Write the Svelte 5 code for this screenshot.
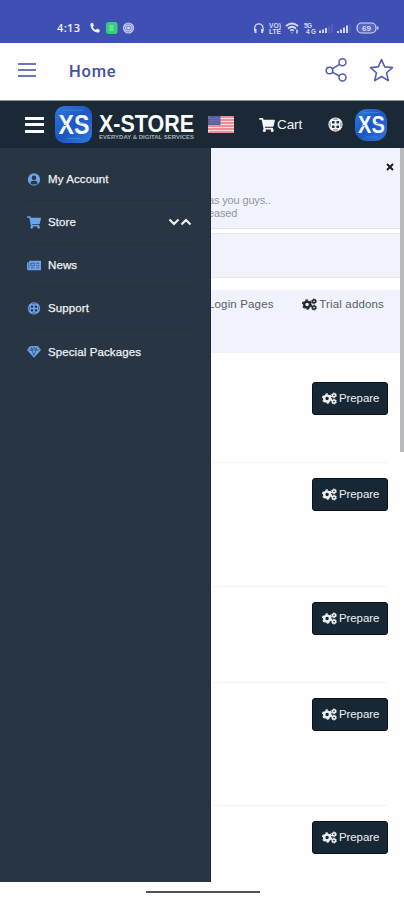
<script>
    const menu = [
        { label: 'My Account', icon: 'user' },
        { label: 'Store', icon: 'cart', expandable: true },
        { label: 'News', icon: 'news' },
        { label: 'Support', icon: 'support' },
        { label: 'Special Packages', icon: 'gem' }
    ];

    // row heights follow the hidden description text
    const rows = [96, 124, 96, 123, 76];
</script>

{#snippet icon(name)}
    {#if name === 'cart'}
        <svg class="icon" viewBox="0 0 576 512" fill="currentColor">
            <path d="M528.12 301.319l47.273-208C578.806 78.301 567.391 64 551.99 64H159.208l-9.166-44.81C147.758 8.021 137.93 0 126.529 0H24C10.745 0 0 10.745 0 24v16c0 13.255 10.745 24 24 24h69.883l70.248 343.435C147.325 417.1 136 435.222 136 456c0 30.928 25.072 56 56 56s56-25.072 56-56c0-15.674-6.447-29.835-16.824-40h209.647C430.447 426.165 424 440.326 424 456c0 30.928 25.072 56 56 56s56-25.072 56-56c0-22.172-12.888-41.332-31.579-50.405l5.517-24.276c3.413-15.018-8.002-29.319-23.403-29.319H218.117l-6.545-32h293.145c11.206 0 20.92-7.754 23.403-18.681z" />
        </svg>
    {:else if name === 'user'}
        <svg class="icon" viewBox="0 0 16 16">
            <circle cx="8" cy="8" r="7.6" fill="currentColor" />
            <circle cx="8" cy="5.9" r="2.7" fill="#283643" />
            <path d="M3.4 12.2c.7-2 2-2.7 4.6-2.7s3.9.7 4.6 2.7c-2.3 2.5-6.9 2.5-9.2 0z" fill="#283643" />
        </svg>
    {:else if name === 'news'}
        <svg class="icon" viewBox="0 0 18 14">
            <path d="M3 1h15v12H2a2 2 0 0 1-2-2V3h2" fill="currentColor" />
            <path d="M2.3 3v8M5 4h4.5v3.500H5zM11.500 4.300h4.500M11.500 7h4.500M5 10h4.500M11.500 10h4.500" fill="none" stroke="#283643" stroke-width=".7" />
        </svg>
    {:else if name === 'support'}
        <svg class="icon" viewBox="0 0 16 16">
            <circle cx="8" cy="8" r="7.6" fill="currentColor" />
            <g fill="#23313e">
                <rect x="4.200" y="4.200" width="2.800" height="2.800" rx=".6" />
                <rect x="9" y="4.200" width="2.800" height="2.800" rx=".6" />
                <rect x="4.200" y="9" width="2.800" height="2.800" rx=".6" />
                <rect x="9" y="9" width="2.800" height="2.800" rx=".6" />
            </g>
            <path d="M5.600 2.200h4.800M5.600 13.800h4.800M2.200 5.600v4.800M13.800 5.600v4.800" stroke="#23313e" stroke-width=".7" />
        </svg>
    {:else if name === 'gem'}
        <svg class="icon" viewBox="0 0 18 16">
            <path d="M4 1h10l4 5-9 10L0 6z" fill="currentColor" />
            <path d="M2 6h14M6 6l3 7 3-7M5 2l1.500 4L9 2l2.500 4L13 2" fill="none" stroke="#283643" stroke-width=".8" />
        </svg>
    {:else if name === 'cogs'}
        <svg class="icon" viewBox="0 0 20 16" fill="none" stroke="currentColor">
            <circle cx="6.800" cy="8" r="3.900" stroke-width="3.200" />
            <circle cx="6.800" cy="8" r="5.900" stroke-width="2" stroke-dasharray="3.400 2.780" />
            <circle cx="16" cy="3.800" r="2.100" stroke-width="2.100" />
            <circle cx="16" cy="3.800" r="3.300" stroke-width="1" stroke-dasharray="2 1.450" />
            <circle cx="16" cy="12.200" r="2.100" stroke-width="2.100" />
            <circle cx="16" cy="12.200" r="3.300" stroke-width="1" stroke-dasharray="2 1.450" />
        </svg>
    {/if}
{/snippet}

{#snippet badge()}
    <svg class="badge" viewBox="0 0 36 36">
        <defs>
            <linearGradient id="blue" x1="0" y1="0" x2="1" y2="1">
                <stop offset="0" stop-color="#2f7bdf" />
                <stop offset=".5" stop-color="#1c56c4" />
                <stop offset="1" stop-color="#2c79dc" />
            </linearGradient>
        </defs>
        <rect width="36" height="36" rx="9" fill="url(#blue)" />
        <path d="M8 4h20M12 31.500h13" stroke="#3f86e2" stroke-width=".8" />
        <text x="3.500" y="27" textLength="30" lengthAdjust="spacingAndGlyphs" class="badge-text">XS</text>
        <path d="M4 20.500l7-2M24 16.500h8" stroke="#2462cb" stroke-width=".9" />
    </svg>
{/snippet}

<div class="phone">
    <div class="status">
        <span class="clock">4:13</span>
        <svg class="left-icons" viewBox="0 0 46 14">
            <path d="M1.500 2.500l2.200-.7 1.300 3-1.300 1.100q1 2 3.100 3.100l1.200-1.400 3 1.400-.8 2.300C5.500 12.500.8 7.500 1.500 2.500z" fill="#eef0fc" />
            <rect x="17" y="1" width="11.500" height="12" rx="2.500" fill="#35cf79" />
            <path d="M20.500 5h4M20.500 7h3.500M20.500 9h4" stroke="#9cf0bd" stroke-width="1" />
            <circle cx="39.500" cy="7" r="5" fill="#7885ce" stroke="#c6ccf0" stroke-width="1.200" />
            <rect x="36.700" y="4.200" width="5.600" height="5.600" rx="1.500" fill="none" stroke="#d7dbf6" />
            <circle cx="39.500" cy="7" r="1.300" fill="#d7dbf6" />
        </svg>
        <svg class="right-icons" viewBox="0 0 126 14" fill="none" stroke="#d6daf5">
            <path d="M1.700 10V7a4 4 0 0 1 8.300 0v3" stroke-width="1.300" />
            <path d="M2.500 8v4M9.200 8v4" stroke-width="2" />
            <g class="tiny">
                <text x="16" y="6.500" textLength="12" lengthAdjust="spacingAndGlyphs">VO)</text>
                <text x="16" y="12.500" textLength="12" lengthAdjust="spacingAndGlyphs">LTE</text>
                <text x="51" y="6.500" textLength="8">5G</text>
                <text x="53" y="12.500" textLength="10">4G</text>
            </g>
            <path d="M33 5q6-5 12 0M35 7.500q4-3.500 8 0M37.200 9.700q1.800-1.500 3.600 0" stroke-width="1.700" />
            <path d="M39 11.500v.8M44 8.500v4" stroke-width="1.500" />
            <path d="M67 12v-2.500M70 12V8.500M73 12V7" stroke-width="1.900" />
            <path d="M76 12V5M79 12V3" stroke="#5566c0" stroke-width="1.500" />
            <path d="M85 12v-2M88 12V8.500M91 12V6.500M94 12V4.500" stroke-width="1.900" />
            <path d="M97 12V3" stroke="#5566c0" stroke-width="1.500" />
            <rect x="104" y="2" width="19" height="10" rx="4.500" fill="#5767c1" stroke-width="1.200" />
            <path d="M124.800 5.500v3" stroke-width="1.300" />
            <text class="battery" x="109" y="10">69</text>
        </svg>
    </div>

    <div class="appbar">
        <div class="burger thin"><i></i><i></i><i></i></div>
        <h1>Home</h1>
        <svg class="share" viewBox="0 0 24 24" fill="none" stroke="#515daa" stroke-width="1.500">
            <circle cx="5.500" cy="12.500" r="3.300" />
            <circle cx="18.500" cy="4.300" r="3.500" />
            <circle cx="18.500" cy="19.500" r="3.500" />
            <path d="M8.200 10.800l7.300-4.500M8.200 14.200l7.300 3.800" />
        </svg>
        <svg class="star" viewBox="0 0 24 24" fill="none" stroke="#515daa" stroke-width="1.500" stroke-linejoin="round">
            <path d="M12 1.500l3.100 7 7.400.7-5.600 5 1.600 7.500-6.500-3.900-6.500 3.900 1.600-7.500-5.600-5 7.400-.7z" />
        </svg>
    </div>

    <div class="site">
        <header>
            <div class="burger"><i></i><i></i><i></i></div>
            {@render badge()}
            <svg class="brand" viewBox="0 0 98 36">
                <text class="brand-name" x="1" y="24.500" textLength="95" lengthAdjust="spacingAndGlyphs">X-STORE</text>
                <text class="brand-sub" x="1" y="31.500" textLength="95" lengthAdjust="spacingAndGlyphs">EVERYDAY &amp; DIGITAL SERVICES</text>
            </svg>
            <svg class="flag" viewBox="0 0 26 17">
                <rect width="26" height="17" rx="1.500" fill="#f3dfe4" />
                <path d="M1 1h25M0 4h26M0 7h26M0 10h26M0 13h26M1 16h24" stroke="#ea7480" stroke-width="1.400" />
                <path d="M1.500 0H12.500v9H0V1.500z" fill="#5960a0" />
                <path d="M1.500 2.500h10M1.500 4.700h10M1.500 6.900h10" stroke="#9197c4" stroke-width=".7" stroke-dasharray="1 1" />
            </svg>
            <span class="cart">{@render icon('cart')}Cart</span>
            <span class="help">{@render icon('support')}</span>
            <span class="avatar">{@render badge()}</span>
        </header>

        <div class="body">
            <main>
                <section class="notice">
                    <svg class="close" viewBox="0 0 8 8"><path d="M1 1l6 6M7 1L1 7" stroke="#16191d" stroke-width="1.900" /></svg>
                    <p>as you guys..<br />eased</p>
                </section>
                <section class="blank"></section>
                <section class="tabs">
                    <span class="login">Login Pages</span>
                    <span class="trial">{@render icon('cogs')}Trial addons</span>
                </section>
                <div class="list">
                    {#each rows as height}
                        <div class="row" style="height: {height}px">
                            <button>{@render icon('cogs')}Prepare</button>
                        </div>
                    {/each}
                </div>
            </main>
            <div class="scrollbar"></div>

            <nav>
                {#each menu as item}
                    <a href="#top">
                        {@render icon(item.icon)}
                        <span>{item.label}</span>
                        {#if item.expandable}
                            <svg class="arrows" viewBox="0 0 24 8" fill="none" stroke="#f0f3f6" stroke-width="2">
                                <path d="M1.500 1.500L6 6l4.500-4.500M13.500 6.500L18 2l4.500 4.500" />
                            </svg>
                        {/if}
                    </a>
                {/each}
            </nav>
        </div>
    </div>

    <div class="gesture"></div>
</div>

<style>
    :global(body) {
        margin: 0;
        background: #fff;
    }

    .phone {
        width: 404px;
        height: 900px;
        display: flex;
        flex-direction: column;
        overflow: hidden;
        background: #fefefe;
        font-family: "Liberation Sans", Arial, sans-serif;
    }

    svg {
        display: block;
        flex: none;
    }

    .status {
        height: 43px;
        flex: none;
        box-sizing: border-box;
        display: flex;
        align-items: center;
        padding: 12px 25px 0 57px;
        background: #3e50b4;
    }

    .clock {
        width: 32px;
        font: 600 11px "Open Sans", sans-serif;
        letter-spacing: 0.4px;
        color: #f1f3fd;
    }

    .left-icons {
        width: 46px;
        height: 14px;
    }

    .right-icons {
        width: 126px;
        height: 14px;
        margin-left: auto;
    }

    .tiny text,
    .battery {
        font: 700 6.5px "Liberation Sans", sans-serif;
        fill: #d6daf5;
        stroke: none;
    }

    .battery {
        font-size: 8px;
    }

    .appbar {
        height: 57px;
        flex: none;
        box-sizing: border-box;
        display: flex;
        align-items: center;
        padding: 0 10px 3px 18px;
    }

    .burger {
        width: 19px;
        height: 16px;
        flex: none;
        display: flex;
        flex-direction: column;
        justify-content: space-between;
    }

    .burger i {
        height: 3px;
        background: #fff;
    }

    .burger.thin {
        width: 18px;
        height: 14px;
    }

    .burger.thin i {
        height: 2px;
        background: #6d77b8;
    }

    h1 {
        margin: 2px 0 0 33px;
        font: 500 16.5px Roboto, sans-serif;
        letter-spacing: 0.8px;
        color: #4450a4;
    }

    .share {
        width: 24px;
        height: 24px;
        margin-left: auto;
    }

    .star {
        width: 25px;
        height: 25px;
        margin-left: 21px;
    }

    .site {
        height: 782px;
        flex: none;
    }

    header {
        height: 48px;
        box-sizing: border-box;
        display: flex;
        align-items: center;
        padding-left: 25px;
        border-top: 1px solid #8b949b;
        background: #1a2935;
        color: #f4f6f8;
    }

    .badge {
        width: 37px;
        height: 37px;
        margin-left: 11px;
    }

    .badge-text {
        font: 700 26.5px "Liberation Sans", sans-serif;
        fill: #f5f9ff;
    }

    .brand {
        width: 98px;
        height: 36px;
        margin-left: 6px;
        overflow: visible;
    }

    .brand-name {
        font: 600 24.5px "Liberation Sans", sans-serif;
        fill: #fafbfc;
    }

    .brand-sub {
        font: 700 5px "Liberation Sans", sans-serif;
        fill: #a4adb4;
    }

    .flag {
        width: 26px;
        height: 17px;
        margin-left: 12px;
    }

    .cart {
        display: flex;
        align-items: center;
        gap: 2px;
        margin-left: 25px;
        width: 45px;
        font-size: 13.5px;
        letter-spacing: -0.1px;
    }

    .cart .icon {
        width: 16px;
        height: 14px;
    }

    .help {
        margin-left: 24px;
    }

    .help .icon {
        width: 15px;
        height: 15px;
    }

    .avatar {
        width: 32px;
        height: 32px;
        margin-left: 12px;
        border-radius: 12px;
        overflow: hidden;
    }

    .avatar .badge {
        width: 32px;
        height: 32px;
        margin: 0;
    }

    .body {
        position: relative;
        height: 734px;
        display: flex;
    }

    main {
        flex: 1;
    }

    .scrollbar {
        width: 4px;
        height: 304px;
        background: #b9babc;
    }

    section {
        box-sizing: border-box;
        background: #f0f3fb;
    }

    .notice {
        height: 81px;
        padding: 15px 6px 0 208px;
        border-bottom: 1px solid #dfe2e8;
    }

    .close {
        width: 8px;
        height: 8px;
        margin-left: auto;
    }

    .notice p {
        margin: 23px 0 0;
        font-size: 11px;
        line-height: 12.5px;
        letter-spacing: -0.15px;
        color: #92969d;
    }

    .blank {
        height: 45px;
        margin-top: 4px;
        border: solid #e6e9f0;
        border-width: 1px 0;
    }

    .tabs {
        height: 63px;
        margin-top: 12px;
        padding: 7px 16px 0 208px;
        display: flex;
        justify-content: space-between;
        font-size: 11.5px;
        line-height: 15px;
        letter-spacing: 0.15px;
        color: #5a5e65;
        white-space: nowrap;
    }

    .trial,
    button {
        display: flex;
        align-items: center;
        gap: 2px;
    }

    .trial {
        height: 15px;
    }

    .trial .icon,
    button .icon {
        width: 15px;
        height: 13px;
    }

    .trial .icon {
        color: #24282d;
    }

    .list {
        padding: 14px 12px 0 212px;
    }

    .row {
        box-sizing: border-box;
        display: flex;
        justify-content: flex-end;
        align-items: flex-start;
        padding-top: 15px;
        border-bottom: 1px solid #f4f4f5;
    }

    .row:last-child {
        border-bottom: none;
    }

    button {
        width: 76px;
        height: 33px;
        box-sizing: border-box;
        padding: 0 0 1px 9px;
        border: 1px solid #08121c;
        border-radius: 3px;
        background: #182734;
        font: 11.5px "Liberation Sans", Arial, sans-serif;
        letter-spacing: -0.1px;
        color: #eef1f4;
    }

    nav {
        position: absolute;
        top: 0;
        left: 0;
        width: 211px;
        height: 734px;
        box-sizing: border-box;
        padding: 10px 18px 0 27px;
        background: #283643;
        border-right: 1px solid #1b2a38;
    }

    nav a {
        height: 43.1px;
        box-sizing: border-box;
        display: flex;
        align-items: center;
        gap: 7px;
        border-bottom: 1px solid #24313d;
        font-size: 11.5px;
        letter-spacing: 0.1px;
        color: #eff2f5;
        -webkit-text-stroke: 0.25px #eff2f5;
        text-decoration: none;
    }

    nav a:last-child {
        border-bottom: none;
    }

    nav .icon {
        width: 14px;
        height: 13px;
        color: #6ea2ee;
    }

    .arrows {
        width: 24px;
        height: 8px;
        margin-left: auto;
    }

    .gesture {
        width: 114px;
        height: 2px;
        margin: 9px 0 0 146px;
        background: #544f55;
    }
</style>
